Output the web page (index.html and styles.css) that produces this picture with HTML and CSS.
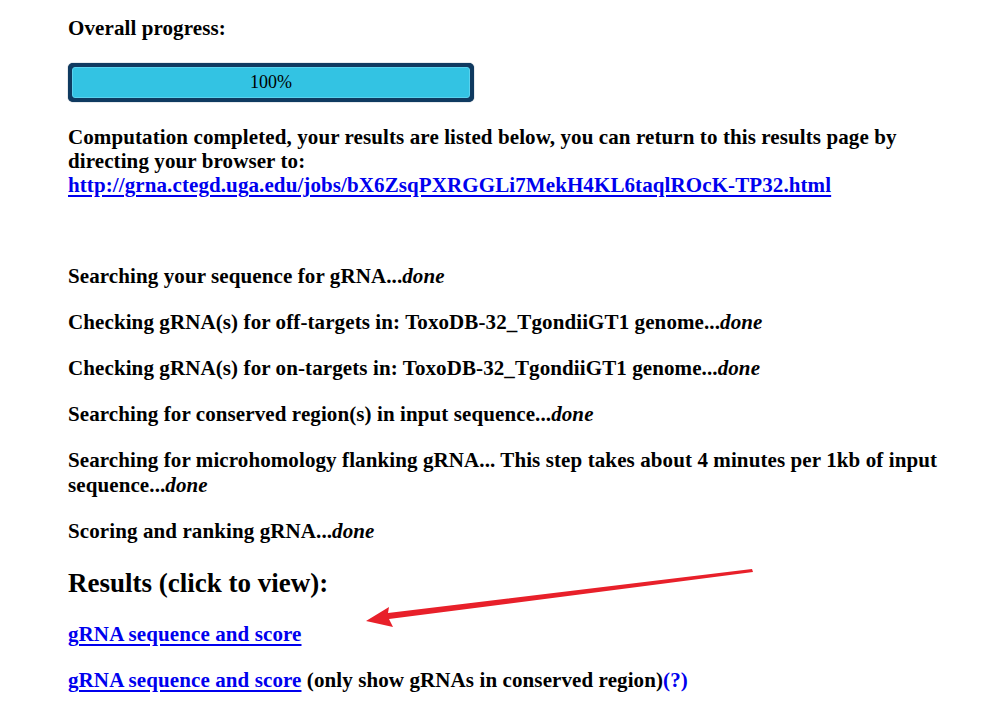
FILE: index.html
```html
<!DOCTYPE html>
<html>
<head>
<meta charset="utf-8">
<link rel="stylesheet" href="styles.css">
</head>
<body>
<div class="page">
  <p class="label">Overall progress:</p>
  <div class="bar"><div class="fill">100%</div></div>
  <p class="done-msg">Computation completed, your results are listed below, you can return to this results page by directing your browser to:<br><a href="#">http://grna.ctegd.uga.edu/jobs/bX6ZsqPXRGGLi7MekH4KL6taqlROcK-TP32.html</a></p>
  <div class="steps">
    <p>Searching your sequence for gRNA...<i>done</i></p>
    <p>Checking gRNA(s) for off-targets in: ToxoDB-32_TgondiiGT1 genome...<i>done</i></p>
    <p>Checking gRNA(s) for on-targets in: ToxoDB-32_TgondiiGT1 genome...<i>done</i></p>
    <p>Searching for conserved region(s) in input sequence...<i>done</i></p>
    <p>Searching for microhomology flanking gRNA... This step takes about 4 minutes per 1kb of input sequence...<i>done</i></p>
    <p>Scoring and ranking gRNA...<i>done</i></p>
  </div>
  <h2 class="results">Results (click to view):</h2>
  <p class="link-row"><a href="#">gRNA sequence and score</a></p>
  <p class="link-row"><a href="#">gRNA sequence and score</a> (only show gRNAs in conserved region)<span class="help">(?)</span></p>
</div>
<svg class="arrow" width="984" height="702" viewBox="0 0 984 702">
  <polygon points="752,569 753,572 389,619 393,627 366,621 389,607 388,613" fill="#e8202a"/>
</svg>
</body>
</html>
```
FILE: styles.css
```css
html, body {
  margin: 0;
  padding: 0;
  background: #ffffff;
}
body {
  font-family: "Liberation Serif", "Times New Roman", serif;
  font-weight: bold;
  font-size: 21px;
  color: #000;
}
.page {
  width: 900px;
  padding: 16px 0 0 68px;
}
p {
  margin: 0;
  line-height: 24px;
  letter-spacing: 0.1px;
}
a {
  color: #0000ee;
  text-decoration-thickness: 2px;
  text-underline-offset: 3px;
}
.label {
  margin-bottom: 23px;
}
.bar {
  width: 398px;
  height: 31px;
  background: #0f3a60;
  border-radius: 5px;
  padding: 4px;
  box-shadow: 0 0 1px #0a2a48;
}
.fill {
  height: 29px;
  border: 1px solid #5ad2ee;
  border-radius: 3px;
  background: #33c3e3;
  font-weight: normal;
  font-size: 18px;
  line-height: 29px;
  text-align: center;
}
.done-msg {
  margin-top: 23px;
}
.steps {
  margin-top: 67px;
  display: flex;
  flex-direction: column;
  gap: 21px;
}
.steps p {
  line-height: 25px;
}
.results {
  font-size: 27px;
  margin: 25px 0 0 0;
  line-height: 28px;
}
.link-row {
  margin-top: 25px;
}
.link-row + .link-row {
  margin-top: 22px;
}
.help {
  color: #0000ee;
}
.arrow {
  position: absolute;
  left: 0;
  top: 0;
  pointer-events: none;
}
```
